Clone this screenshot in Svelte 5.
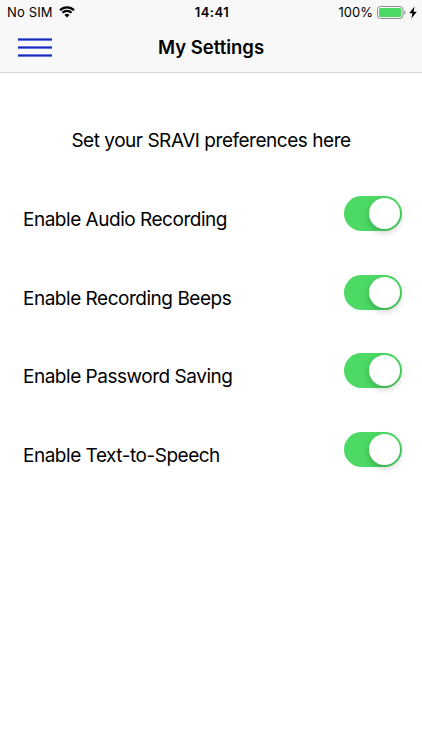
<script lang="ts">
  let settings = $state([
    { label: 'Enable Audio Recording', enabled: true },
    { label: 'Enable Recording Beeps', enabled: true },
    { label: 'Enable Password Saving', enabled: true },
    { label: 'Enable Text-to-Speech', enabled: true }
  ]);
</script>

<div class="screen">
  <header>
    <div class="status">
      <div class="carrier">
        <span>No SIM</span>
        <svg class="wifi" viewBox="0 0 16 12" aria-hidden="true">
          <path d="M1 4.3a10 10 0 0 1 14 0" />
          <path d="M3.4 6.8a6.6 6.6 0 0 1 9.2 0" />
          <path class="dot" d="M5.5 9a3.6 3.6 0 0 1 5 0L8 11.5z" />
        </svg>
      </div>
      <span class="time">14:41</span>
      <div class="power">
        <span>100%</span>
        <svg class="battery" viewBox="0 0 30 13" aria-hidden="true">
          <rect x="0.5" y="0.5" width="25.5" height="12" rx="3" fill="none" stroke="#8c8c8c" />
          <rect x="2" y="2" width="22.5" height="9" rx="1.5" fill="#4cd964" />
          <path d="M27.3 4.5v4c1.7-.5 1.7-3.5 0-4" fill="#8c8c8c" />
        </svg>
        <svg class="bolt" viewBox="0 0 7 12" aria-hidden="true">
          <path d="M5 .5 0 6.7h3L2 11.5 7 5.2H4z" />
        </svg>
      </div>
    </div>
    <div class="navbar">
      <button class="menu" aria-label="Menu">
        <span></span><span></span><span></span>
      </button>
      <h1>My Settings</h1>
    </div>
  </header>

  <main>
    <p class="intro">Set your SRAVI preferences here</p>
    {#each settings as setting}
      <div class="row">
        <span class="label">{setting.label}</span>
        <button
          class="switch"
          class:on={setting.enabled}
          role="switch"
          aria-checked={setting.enabled}
          aria-label={setting.label}
          onclick={() => (setting.enabled = !setting.enabled)}
        >
          <span class="knob"></span>
        </button>
      </div>
    {/each}
  </main>
</div>

<style>
  :global(body) {
    background: #fff;
  }

  .screen {
    height: 750px;
    overflow: hidden;
    background: #fff;
    color: #000;
    font-family: Inter, 'Liberation Sans', sans-serif;
  }

  header {
    box-sizing: border-box;
    height: 73px;
    background: #f8f8f8;
    border-bottom: 1px solid #d8d8d8;
  }

  .status {
    display: grid;
    grid-template-columns: 1fr auto 1fr;
    align-items: center;
    height: 24px;
    padding: 0 5px 0 7px;
    font-size: 13px;
  }

  .carrier,
  .power {
    display: flex;
    align-items: center;
  }

  .carrier {
    gap: 6px;
    letter-spacing: 0.15px;
  }

  .power {
    justify-content: flex-end;
  }

  .time {
    font-weight: 600;
    letter-spacing: 0.5px;
  }

  .wifi {
    width: 16px;
    height: 12px;
    margin-top: -1px;
    fill: none;
    stroke: #000;
    stroke-width: 2.2;
  }

  .wifi .dot {
    fill: #000;
    stroke: none;
  }

  .battery {
    width: 30px;
    height: 13px;
    margin-left: 4px;
  }

  .bolt {
    width: 8px;
    height: 13px;
    margin-left: 2px;
  }

  .navbar {
    display: grid;
    grid-template-columns: 52px 1fr 52px;
    align-items: center;
    height: 47px;
  }

  .menu {
    display: flex;
    flex-direction: column;
    gap: 5px;
    width: 34px;
    margin-left: 18px;
    padding: 0;
    border: 0;
    background: none;
  }

  .menu span {
    box-sizing: border-box;
    width: 34px;
    height: 3px;
    border: solid #6577ea;
    border-width: 1px 0;
    background: #1a2bad;
  }

  h1 {
    margin: -1px 0 0;
    font-size: 18.5px;
    font-weight: 600;
    line-height: 24px;
    text-align: center;
  }

  .intro {
    margin: 55px 0 25px;
    font-size: 19px;
    line-height: 26px;
    letter-spacing: -0.47px;
    text-align: center;
  }

  .row {
    display: flex;
    align-items: center;
    justify-content: space-between;
    height: 78.7px;
    padding: 0 20.5px 0 23px;
  }

  .label {
    padding-top: 2px;
    font-size: 19px;
    letter-spacing: -0.48px;
  }

  .switch {
    width: 57.5px;
    height: 35px;
    margin-bottom: 10px;
    padding: 2px 1.5px;
    border: 0;
    border-radius: 18px;
    background: #e5e5ea;
  }

  .switch.on {
    background: #4cd964;
  }

  .knob {
    display: block;
    width: 31px;
    height: 31px;
    border-radius: 50%;
    background: #fff;
    box-shadow: 0 3px 7px rgba(0, 0, 0, 0.22);
  }

  .on .knob {
    margin-left: auto;
  }
</style>
